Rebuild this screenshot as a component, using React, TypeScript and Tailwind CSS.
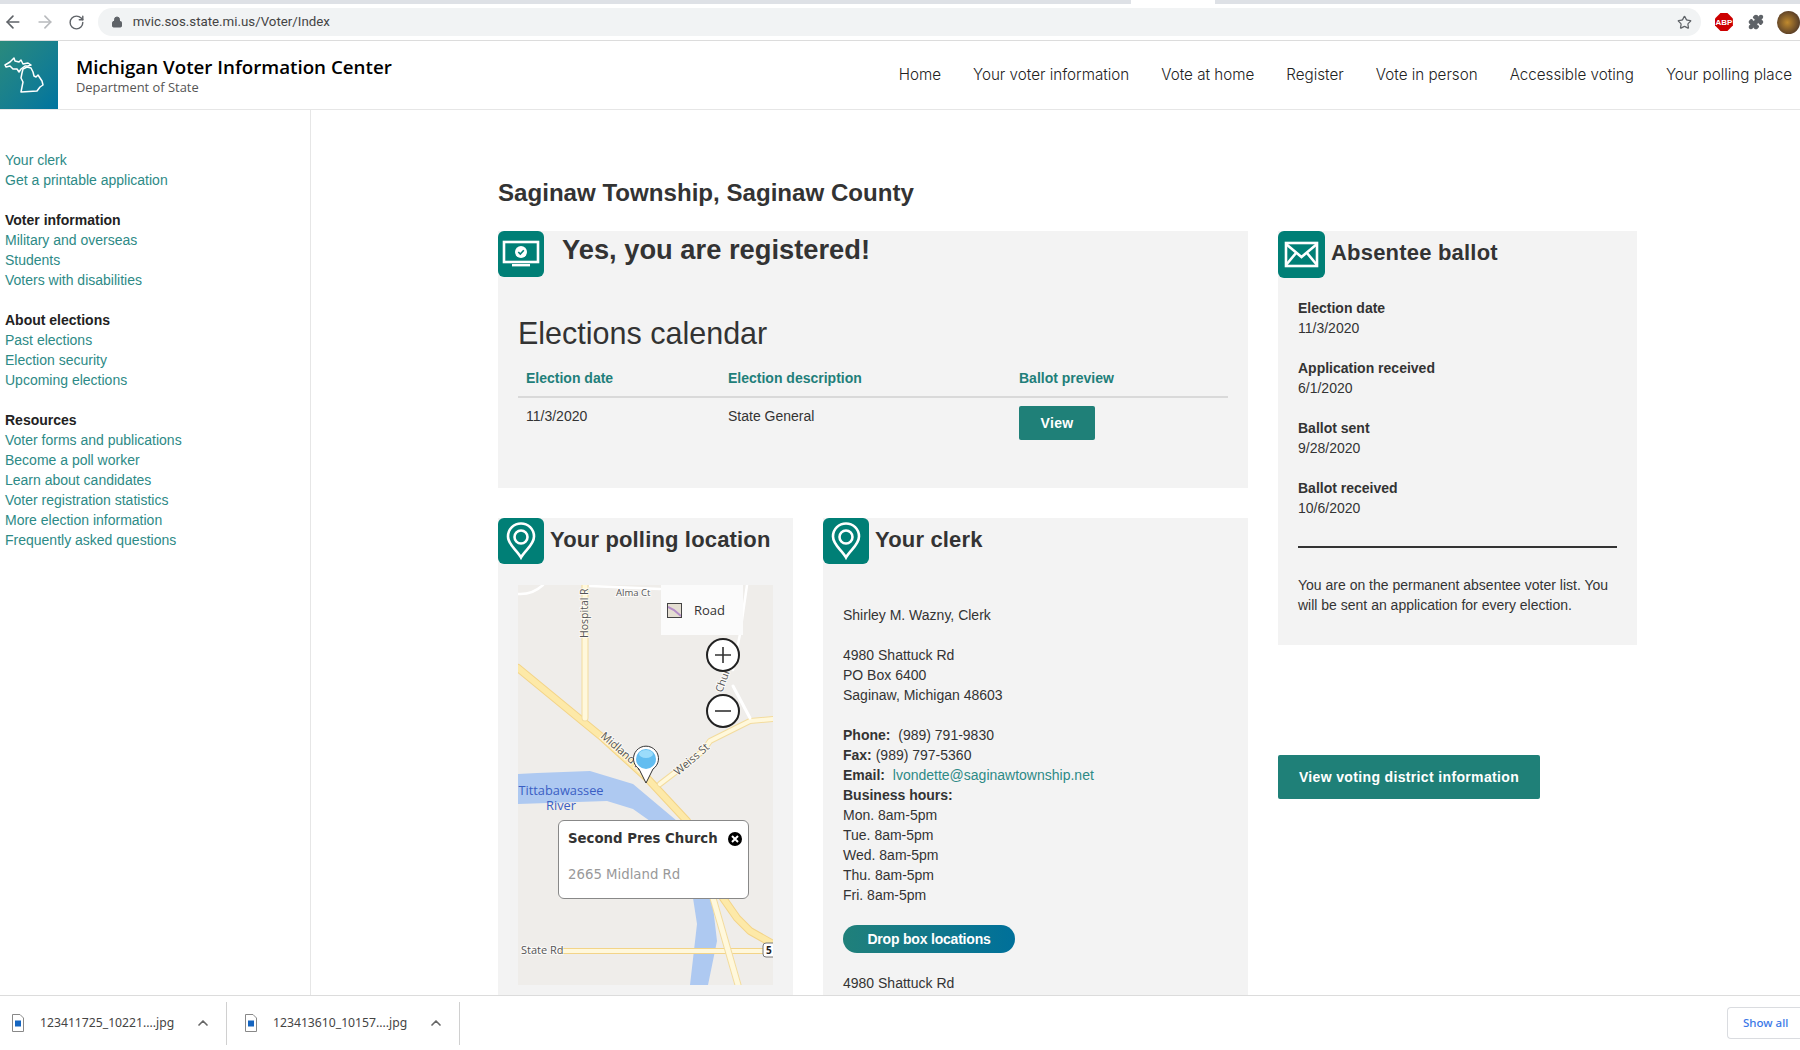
import React from 'react';
import { ArrowLeft, ArrowRight, RotateCw, Lock, Star, Puzzle, ChevronUp } from 'lucide-react';

const navItems = ['Home', 'Your voter information', 'Vote at home', 'Register', 'Vote in person', 'Accessible voting', 'Your polling place'];

const sideGroups = [
  { title: '', links: ['Your clerk', 'Get a printable application'] },
  { title: 'Voter information', links: ['Military and overseas', 'Students', 'Voters with disabilities'] },
  { title: 'About elections', links: ['Past elections', 'Election security', 'Upcoming elections'] },
  {
    title: 'Resources',
    links: ['Voter forms and publications', 'Become a poll worker', 'Learn about candidates', 'Voter registration statistics', 'More election information', 'Frequently asked questions']
  }
];

const absentee = [
  { label: 'Election date', value: '11/3/2020' },
  { label: 'Application received', value: '6/1/2020' },
  { label: 'Ballot sent', value: '9/28/2020' },
  { label: 'Ballot received', value: '10/6/2020' }
];

const hours = ['Mon. 8am-5pm', 'Tue. 8am-5pm', 'Wed. 8am-5pm', 'Thu. 8am-5pm', 'Fri. 8am-5pm'];

const IconBox: React.FC<{ children: React.ReactNode }> = ({ children }) => (
  <div className="w-[46px] h-[46px] shrink-0 rounded-md bg-[#007f76]">
    <svg width="46" height="46" viewBox="0 0 46 46" fill="none">{children}</svg>
  </div>
);

const PinIcon = () => (
  <IconBox>
    <path d="M23 39.5 C19 32 10 27 10 18.5 C10 11 16 5.5 23 5.5 C30 5.5 36 11 36 18.5 C36 27 27 32 23 39.5 Z" stroke="white" strokeWidth="2.6" />
    <circle cx="23" cy="19" r="6.5" stroke="white" strokeWidth="2.6" />
  </IconBox>
);

const MichiganLogo = () => (
  <svg width="40" height="36" viewBox="0 0 40 36" fill="none" stroke="white" strokeWidth="1.5" strokeLinejoin="round">
    <path d="M1 8 L6 5 L10 1 L11 4 L15 5 L17 3 L19 7 L24 6 L27 8 L24 9 L21 9 L17 12 L15 15 L13 12 L9 12 L6 9 L2 10 Z" />
    <path d="M19 12 L23 10 L27 11 L29 15 L30 19 L32 20 L34 18 L38 24 L39 28 L36 30 L33 34 L17 35 L18 30 L19 25 L17 21 L18 16 Z" />
  </svg>
);

const MapPanel = () => (
  <div className="relative w-[255px] h-[400px] overflow-hidden bg-[#efedea] font-['Open_Sans',sans-serif]">
    <svg width="255" height="400" viewBox="0 0 255 400" fill="none">
      {/* river */}
      <path d="M0 189 L19 188 L72 186 L115 199 L159 236 L175 313 L179 339 L172 400 L190 400 L199 356 L194 313 L160 236 L132 236 L115 224 L89 216 L0 219 Z" fill="#aec9f1" />
      {/* roads */}
      <g strokeLinecap="round" strokeLinejoin="round">
        <path d="M0 83 L85 153 L129 193 L169 236 L205 313 L219 333 L232 346 L255 359" stroke="#f3d488" strokeWidth="8" />
        <path d="M0 83 L85 153 L129 193 L169 236 L205 313 L219 333 L232 346 L255 359" stroke="#fde9a8" strokeWidth="6" />
        <path d="M67 0 L67 133" stroke="#f3dc9e" strokeWidth="7" />
        <path d="M67 0 L67 133" stroke="#fff8dc" strokeWidth="5" />
        <path d="M142 199 L185 166 L192 156 L232 136 L255 134" stroke="#f3dc9e" strokeWidth="6" />
        <path d="M142 199 L185 166 L192 156 L232 136 L255 134" stroke="#fff8dc" strokeWidth="4" />
        <path d="M45 366 L245 366" stroke="#f3d488" strokeWidth="6" />
        <path d="M45 366 L245 366" stroke="#fff8dc" strokeWidth="4" />
        <path d="M195 313 L220 400" stroke="#f3dc9e" strokeWidth="7" />
        <path d="M195 313 L220 400" stroke="#fff8dc" strokeWidth="5" />
        <path d="M215 101 L232 133" stroke="#ffffff" strokeWidth="3" />
        <path d="M229 0 L222 49 L215 85" stroke="#ffffff" strokeWidth="2.5" />
        <path d="M0 9 Q14 10 25 0" stroke="#ffffff" strokeWidth="2.5" />
        <path d="M72 1 L142 4" stroke="#ffffff" strokeWidth="2.5" />
      </g>
      {/* road labels */}
      <g fill="#555" fontSize="10.5" fontFamily="'Open Sans',sans-serif" stroke="#ffffff" strokeWidth="2" paintOrder="stroke" strokeOpacity="0.7">
        <text x="98" y="11" fontSize="9.5">Alma Ct</text>
        <text transform="translate(70 53) rotate(-90)">Hospital R</text>
        <text transform="translate(82 152) rotate(41)" fontSize="11">Midland Rd</text>
        <text transform="translate(160 191) rotate(-41)" fontSize="11">Weiss St</text>
        <text transform="translate(204 108) rotate(-70)">Church</text>
        <text x="3" y="369" fontSize="11">State Rd</text>
      </g>
      <g fill="#3b5fc4" fontSize="12.8" textAnchor="middle" fontFamily="'Open Sans',sans-serif">
        <text x="43" y="210">Tittabawassee</text>
        <text x="43" y="225">River</text>
      </g>
      <rect x="245" y="358" width="14" height="14" rx="3" fill="white" stroke="#777" />
      <text x="248" y="369" fontSize="10" fontWeight="700" fill="#222">5</text>
      {/* pin */}
      <path d="M128 198 L121 184 A12.5 12.5 0 1 1 135 184 Z" fill="white" stroke="#333" strokeWidth="1" />
      <circle cx="128" cy="174" r="10" fill="#62bdf0" />
      <ellipse cx="128" cy="169" rx="7" ry="4" fill="#9bdcfb" />
    </svg>

    {/* road/aerial switcher */}
    <div className="absolute left-[143px] top-0 w-[82px] h-[50px] bg-[#fbfbfb] flex items-center pl-[6px] gap-3">
      <div className="w-[15px] h-[15px] border border-[#444] bg-[#e4ded2] overflow-hidden">
        <svg width="13" height="13" viewBox="0 0 13 13" fill="none">
          <path d="M0 3 L6 6 L13 12" stroke="#b48cc8" strokeWidth="2" />
        </svg>
      </div>
      <span className="text-[13px] leading-none text-[#333]">Road</span>
    </div>

    {/* zoom buttons */}
    <div className="absolute left-[188px] top-[53px] w-[34px] h-[34px] rounded-full bg-white border-2 border-[#222] flex items-center justify-center">
      <svg width="18" height="18" viewBox="0 0 18 18" stroke="#333" strokeWidth="1.6"><path d="M1 9 H17 M9 1 V17" /></svg>
    </div>
    <div className="absolute left-[188px] top-[109px] w-[34px] h-[34px] rounded-full bg-white border-2 border-[#222] flex items-center justify-center">
      <svg width="18" height="18" viewBox="0 0 18 18" stroke="#333" strokeWidth="1.6"><path d="M1 9 H17" /></svg>
    </div>

    {/* info box */}
    <div className="absolute left-[40px] top-[235px] w-[191px] h-[79px] bg-white border border-[#888] rounded-[6px] px-[9px] pt-[10px] font-['DejaVu_Sans',sans-serif]">
      <div className="flex items-center justify-between">
        <span className="text-[13.3px] leading-[16px] font-bold text-[#333] whitespace-nowrap">Second Pres Church</span>
        <div className="w-[14px] h-[14px] rounded-full bg-black flex items-center justify-center -mr-[3px] shrink-0">
          <svg width="8" height="8" viewBox="0 0 8 8" stroke="white" strokeWidth="2"><path d="M1 1 L7 7 M7 1 L1 7" /></svg>
        </div>
      </div>
      <p className="mt-[20px] text-[13.3px] leading-[16px] text-[#999]">2665 Midland Rd</p>
    </div>
  </div>
);

const App: React.FC = () => {
  return (
    <div className="h-[1050px] w-[1800px] overflow-hidden flex flex-col bg-white font-['Liberation_Sans',Arial,sans-serif] text-[14px] leading-[20px] text-[#333]">
      {/* Browser tab strip */}
      <div className="flex h-[4px] shrink-0 bg-[#dee1e6]">
        <div className="w-[1131px]" />
        <div className="w-[84px] bg-white" />
      </div>

      {/* Browser toolbar */}
      <div className="h-[37px] shrink-0 flex items-center border-b border-[#dcdcdc] pl-[3px]">
        <ArrowLeft className="w-[20px] h-[20px] text-[#5f6368]" />
        <ArrowRight className="w-[20px] h-[20px] ml-[12px] text-[#b8babd]" />
        <RotateCw className="w-[17px] h-[17px] ml-[13px] text-[#5f6368]" />
        <div className="ml-[13px] w-[1613px] h-[28px] rounded-full bg-[#f1f3f4] flex items-center pl-[13px] pr-[5px]">
          <Lock className="w-[12px] h-[12px] text-[#5f6368]" fill="#5f6368" />
          <span className="ml-[10px] text-[13.3px] font-['Roboto',sans-serif] text-[#444]">mvic.sos.state.mi.us/Voter/Index</span>
          <Star className="w-[15px] h-[15px] ml-auto mr-[4px] text-[#5f6368]" />
        </div>
        <svg className="ml-[14px]" width="18" height="18" viewBox="0 0 18 18">
          <path d="M5.5 0 H12.5 L18 5.5 V12.5 L12.5 18 H5.5 L0 12.5 V5.5 Z" fill="#cc0000" />
          <text x="9" y="12" textAnchor="middle" fontSize="8" fontWeight="700" fill="white" fontFamily="'Liberation Sans',sans-serif">ABP</text>
        </svg>
        <Puzzle className="w-[16px] h-[16px] ml-[15px] text-[#5f6368]" fill="#5f6368" />
        <div className="ml-[13px] w-[23px] h-[23px] rounded-full bg-[radial-gradient(circle_at_45%_50%,#c08a2e,#5b4028_70%)] shrink-0" />
      </div>

      {/* Site header */}
      <header className="h-[69px] shrink-0 flex items-center border-b border-[#e6e6e6]">
        <div className="w-[58px] h-[68px] shrink-0 bg-gradient-to-br from-[#2a8a7c] to-[#00749f] flex items-center pl-[4px]">
          <MichiganLogo />
        </div>
        <div className="ml-[18px] font-['Open_Sans',sans-serif]">
          <div className="text-[18.75px] leading-[24px] font-semibold text-black">Michigan Voter Information Center</div>
          <div className="text-[12.9px] leading-[16px] text-[#555]">Department of State</div>
        </div>
        <nav className="ml-auto mr-[8px] flex items-center gap-[32px] font-['Inter',sans-serif] font-light text-[15.2px] text-[#222]">
          {navItems.map(item => (
            <span key={item}>{item}</span>
          ))}
        </nav>
      </header>

      <div className="flex-1 min-h-0 flex overflow-hidden">
        {/* Sidebar */}
        <aside className="w-[311px] shrink-0 border-r border-[#e6e6e6] pl-[5px] pt-[40px]">
          {sideGroups.map((group, i) => (
            <div key={i} className="mb-[20px]">
              {group.title && <div className="font-bold text-[#222]">{group.title}</div>}
              {group.links.map(link => (
                <div key={link} className="text-[#2d8a86]">{link}</div>
              ))}
            </div>
          ))}
        </aside>

        {/* Main */}
        <main className="flex-1 pl-[187px] pt-[67px]">
          <h1 className="text-[24.1px] leading-[32px] font-bold text-[#333] mb-[22px]">Saginaw Township, Saginaw County</h1>

          <div className="flex gap-[30px] items-start">
            <div className="w-[750px] flex flex-col gap-[30px]">
              {/* Registered */}
              <section className="h-[257px] bg-[#f3f3f3]">
                <div className="flex">
                  <IconBox>
                    <rect x="6" y="11" width="34" height="20" fill="none" stroke="white" strokeWidth="2.6" />
                    <rect x="14" y="33" width="18" height="2.4" fill="white" />
                    <circle cx="23" cy="21" r="6" fill="white" />
                    <path d="M20.3 21 L22.3 23 L25.8 19.2" stroke="#007f76" strokeWidth="1.6" />
                  </IconBox>
                  <h2 className="ml-[18px] mt-[1px] text-[27.3px] leading-[36px] font-bold">Yes, you are registered!</h2>
                </div>
                <div className="px-[20px]">
                  <h3 className="mt-[34px] text-[30.5px] leading-[44px] text-[#333]">Elections calendar</h3>
                  <div className="mt-[13px] flex font-bold text-[#1f7f7a] px-[8px] pb-[8px] border-b-2 border-[#d9d9d9]">
                    <div className="w-[202px]">Election date</div>
                    <div className="w-[291px]">Election description</div>
                    <div>Ballot preview</div>
                  </div>
                  <div className="flex px-[8px] pt-[8px]">
                    <div className="w-[202px]">11/3/2020</div>
                    <div className="w-[291px]">State General</div>
                    <button className="w-[76px] h-[34px] rounded-[2px] bg-[#1f8078] text-white font-bold tracking-[0.3px]">View</button>
                  </div>
                </div>
              </section>

              <div className="flex gap-[30px] items-start">
                {/* Polling location */}
                <section className="w-[295px] h-[500px] bg-[#f3f3f3]">
                  <div className="flex items-start">
                    <PinIcon />
                    <h2 className="ml-[6px] mt-[6px] text-[22px] leading-[32px] font-bold tracking-[0.16px]">Your polling location</h2>
                  </div>
                  <div className="ml-[20px] mt-[21px]">
                    <MapPanel />
                  </div>
                </section>

                {/* Clerk */}
                <section className="w-[425px] h-[500px] bg-[#f3f3f3]">
                  <div className="flex items-start">
                    <PinIcon />
                    <h2 className="ml-[6px] mt-[6px] text-[22px] leading-[32px] font-bold tracking-[0.16px]">Your clerk</h2>
                  </div>
                  <div className="px-[20px] mt-[41px]">
                    <p>Shirley M. Wazny, Clerk</p>
                    <p className="mt-[20px]">4980 Shattuck Rd</p>
                    <p>PO Box 6400</p>
                    <p>Saginaw, Michigan 48603</p>
                    <p className="mt-[20px]"><b>Phone:</b>&nbsp; (989) 791-9830</p>
                    <p><b>Fax:</b> (989) 797-5360</p>
                    <p><b>Email:</b>&nbsp; <span className="text-[#2d8a86]">lvondette@saginawtownship.net</span></p>
                    <p className="font-bold">Business hours:</p>
                    {hours.map(h => (
                      <p key={h}>{h}</p>
                    ))}
                    <button className="mt-[20px] block w-[172px] h-[28px] rounded-full bg-gradient-to-r from-[#20807a] to-[#00709a] text-white font-bold tracking-[-0.2px]">
                      Drop box locations
                    </button>
                    <p className="mt-[20px]">4980 Shattuck Rd</p>
                  </div>
                </section>
              </div>
            </div>

            {/* Right column */}
            <div className="w-[359px]">
              <section className="h-[414px] bg-[#f3f3f3]">
                <div className="flex items-start">
                  <div className="w-[47px] h-[47px] shrink-0 rounded-md bg-[#007f76]">
                    <svg width="47" height="47" viewBox="0 0 47 47" fill="none" stroke="white" strokeWidth="2.6">
                      <rect x="8" y="12" width="31" height="23" />
                      <path d="M8 13 L23.5 26 L39 13 M8 34 L18 22 M39 34 L29 22" />
                    </svg>
                  </div>
                  <h2 className="ml-[6px] mt-[6px] text-[22px] leading-[32px] font-bold tracking-[0.2px]">Absentee ballot</h2>
                </div>
                <div className="px-[20px] mt-[20px]">
                  {absentee.map((row, i) => (
                    <div key={row.label} className={i === 3 ? 'mb-[28px]' : 'mb-[20px]'}>
                      <div className="font-bold">{row.label}</div>
                      <div>{row.value}</div>
                    </div>
                  ))}
                  <div className="border-t-2 border-[#333]" />
                  <p className="mt-[27px]">You are on the permanent absentee voter list. You will be sent an application for every election.</p>
                </div>
              </section>
              <button className="mt-[110px] w-[262px] h-[44px] rounded-[2px] bg-[#1f8078] text-white font-bold tracking-[0.35px]">
                View voting district information
              </button>
            </div>
          </div>
        </main>
      </div>

      {/* Downloads bar */}
      <div className="h-[55px] shrink-0 border-t border-[#dcdcdc] flex items-center bg-white font-['Noto_Sans',sans-serif] text-[12.2px] text-[#444]">
        {['123411725_10221....jpg', '123413610_10157....jpg'].map((name, i) => (
          <div key={name} className={`${i === 0 ? '-ml-[6px]' : ''} w-[233px] h-[43px] flex items-center pl-[18px] border-r border-[#d0d0d0]`}>
            <svg width="12" height="18" viewBox="0 0 12 18" fill="none" className="shrink-0">
              <path d="M0.5 0.5 H8 L11.5 4 V17.5 H0.5 Z" fill="white" stroke="#888" />
              <rect x="3" y="6.5" width="6" height="6" fill="#1565c0" />
            </svg>
            <span className="ml-[16px] w-[133px] whitespace-nowrap shrink-0">{name}</span>
            <ChevronUp className="w-[16px] h-[16px] ml-[22px] text-[#666] shrink-0" strokeWidth={2.5} />
          </div>
        ))}
        <button className="ml-auto w-[73px] h-[32px] border border-[#dadce0] border-r-0 rounded-l-[4px] pl-[15px] text-left text-[11.5px] text-[#3b78e7] font-medium">
          Show all
        </button>
      </div>
    </div>
  );
};

export default App;
